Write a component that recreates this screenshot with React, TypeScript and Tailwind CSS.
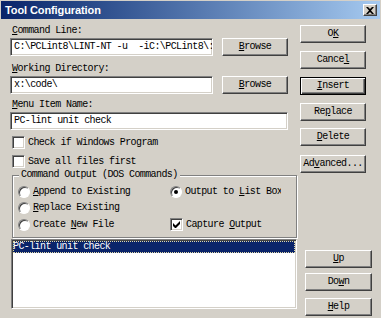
import React from "react";

const raised =
  "border border-t-white border-l-white border-r-[#404040] border-b-[#404040] shadow-[inset_-1px_-1px_#808080]";
const sunken =
  "border border-t-[#808080] border-l-[#808080] border-r-white border-b-white shadow-[inset_1px_1px_#404040,inset_-1px_-1px_#d4d0c8]";

function Btn({ children, def, className = "" }: { children: React.ReactNode; def?: boolean; className?: string }) {
  return (
    <div
      className={
        "flex h-[18px] w-[66px] items-center justify-center whitespace-pre " +
        (def
          ? "border border-black shadow-[inset_1px_1px_#fff,inset_-1px_-1px_#404040,inset_-2px_-2px_#808080] "
          : raised + " ") +
        className
      }
    >
      {children}
    </div>
  );
}

function Field({ text, className = "" }: { text: string; className?: string }) {
  return (
    <div className={"flex h-[18px] items-center overflow-hidden whitespace-pre bg-white pl-[3px] " + sunken + " " + className}>
      {text}
    </div>
  );
}

function Check({ checked }: { checked?: boolean }) {
  return (
    <div className={"flex h-[13px] w-[13px] shrink-0 items-center justify-center bg-white " + sunken}>
      {checked && (
        <svg width="7" height="7" viewBox="0 0 7 7">
          <path d="M0 2v3l2 2h1l4-4V0L2.5 4.5z" fill="#000" />
        </svg>
      )}
    </div>
  );
}

function Radio({ on }: { on?: boolean }) {
  return (
    <div className="flex h-[12px] w-[12px] shrink-0 items-center justify-center rounded-full border border-t-[#808080] border-l-[#808080] border-r-white border-b-white bg-white shadow-[inset_1px_1px_#404040]">
      {on && <div className="h-[4px] w-[4px] rounded-full bg-black" />}
    </div>
  );
}

export default function App() {
  return (
    <div className="h-[318px] w-[381px] overflow-hidden bg-[#d4d0c8] font-['Liberation_Mono',monospace] text-[10px] leading-[12px] tracking-[-0.6px] text-black">
      {/* title bar */}
      <div className="mx-px mt-px flex h-[18px] items-center bg-linear-to-r from-[#0a246a] to-[#a6caf0] pl-[4px] pr-[3px]">
        <span className="font-['Liberation_Sans',sans-serif] text-[11px] font-bold tracking-[-0.1px] text-white">
          Tool Configuration
        </span>
        <div className={"ml-auto flex h-[12px] w-[14px] items-center justify-center bg-[#d4d0c8] " + raised}>
          <svg width="8" height="7" viewBox="0 0 8 7">
            <path d="M0 0h2l2 2 2-2h2L5 3.5 8 7H6L4 5 2 7H0l3-3.5z" fill="#000" />
          </svg>
        </div>
      </div>

      <div className="mt-[6px] flex">
        {/* left column */}
        <div className="ml-[10px] w-[287px]">
          <div className="h-[12px] pl-[2px]">
            <u>C</u>ommand Line:
          </div>
          <div className="mt-px flex">
            <Field className="w-[203px]" text="C:\PCLint8\LINT-NT -u  -iC:\PCLint8\:" />
            <Btn className="ml-[9px]">
              <u>B</u>rowse
            </Btn>
          </div>

          <div className="mt-[7px] h-[12px] pl-[2px]">
            <u>W</u>orking Directory:
          </div>
          <div className="mt-px flex">
            <Field className="w-[203px]" text="x:\code\" />
            <Btn className="ml-[9px]">
              <u>B</u>rowse
            </Btn>
          </div>

          <div className="mt-[5px] h-[12px] pl-[2px]">
            <u>M</u>enu Item Name:
          </div>
          <Field className="mt-px w-[278px]" text="PC-lint unit check" />

          <div className="mt-[6px] ml-[2px] flex h-[13px] items-center gap-[3px]">
            <Check />
            <span>Check if Windows Program</span>
          </div>
          <div className="mt-[6px] ml-[2px] flex h-[13px] items-center gap-[3px]">
            <Check />
            <span>Save all files first</span>
          </div>

          {/* group box */}
          <div className="mt-[7px] ml-[2px] h-[63px] w-[285px] border border-[#808080] shadow-[inset_1px_1px_#fff,1px_1px_#fff]">
            <div className="-mt-[7px] ml-[6px] w-fit bg-[#d4d0c8] px-[2px]">Command Output (DOS Commands)</div>
            <div className="mt-[5px] ml-[5px] grid grid-cols-[152px_111px] gap-y-[4px]">
              <div className="flex items-center gap-[3px]">
                <Radio />
                <span>
                  <u>A</u>ppend to Existing
                </span>
              </div>
              <div className="flex w-[111px] items-center gap-[3px] overflow-hidden whitespace-nowrap">
                <Radio on />
                <span>
                  Output to <u>L</u>ist Box
                </span>
              </div>
              <div className="flex items-center gap-[3px]">
                <Radio />
                <span>
                  <u>R</u>eplace Existing
                </span>
              </div>
              <div />
              <div className="flex items-center gap-[3px]">
                <Radio />
                <span>
                  Create <u>N</u>ew File
                </span>
              </div>
              <div className="flex items-center gap-[3px]">
                <Check checked />
                <span>
                  Capture <u>O</u>utput
                </span>
              </div>
            </div>
          </div>

          {/* list box */}
          <div className={"mt-px ml-px h-[70px] w-[286px] bg-white p-[1px] " + sunken}>
            <div className="h-[12px] bg-[#0a246a] text-white outline-1 -outline-offset-1 outline-dotted outline-[#e0d8a8]">
              PC-lint unit check
            </div>
          </div>
        </div>

        {/* right column */}
        <div className="ml-[3px] flex w-[72px] flex-col">
          <Btn>
            O<u>K</u>
          </Btn>
          <Btn className="mt-[8px]">
            Cance<u>l</u>
          </Btn>
          <Btn def className="mt-[8px]">
            <u>I</u>nsert
          </Btn>
          <Btn className="mt-[8px]">
            Re<u>p</u>lace
          </Btn>
          <Btn className="mt-[7px]">
            <u>D</u>elete
          </Btn>
          <Btn className="mt-[9px]">
            Ad<u>v</u>anced...
          </Btn>
          <Btn className="mt-[77px] ml-[5px] w-[67px]">
            <u>U</u>p
          </Btn>
          <Btn className="mt-[5px] ml-[5px] w-[67px]">
            Do<u>w</u>n
          </Btn>
          <Btn className="mt-[7px] ml-[5px] w-[67px]">
            <u>H</u>elp
          </Btn>
        </div>
      </div>
    </div>
  );
}
